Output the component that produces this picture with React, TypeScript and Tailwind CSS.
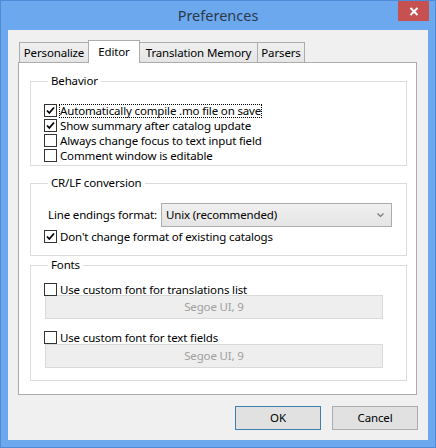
import React from "react";

const CheckMark = () => (
  <svg width="11" height="11" viewBox="0 0 11 11" className="block">
    <path d="M2 5.5 L4.3 8 L9 2.5" fill="none" stroke="#000" strokeWidth="1.8" />
  </svg>
);

const Checkbox = ({ checked, label, focused }: { checked?: boolean; label: string; focused?: boolean }) => (
  <div className="flex items-center h-[15px] leading-[15px]">
    <div className="w-[13px] h-[13px] border border-[#333333] bg-white flex items-center justify-center shrink-0">
      {checked && <CheckMark />}
    </div>
    <span
      className={
        focused
          ? "ml-[2px] px-[1px] leading-[14px] whitespace-nowrap outline outline-1 outline-dotted outline-black -outline-offset-1"
          : "ml-[3px] leading-[14px] whitespace-nowrap"
      }
    >
      {label}
    </span>
  </div>
);

const Group = ({ title, className, children }: { title: string; className: string; children: React.ReactNode }) => (
  <fieldset className={"border border-[#dcdcdc] ml-[11px] w-[377px] " + className}>
    <legend className="ml-[4px] px-[3px] leading-[16px]">{title}</legend>
    {children}
  </fieldset>
);

const FontButton = () => (
  <div className="ml-[1px] w-[338px] h-[24px] bg-[#eeeeee] border border-[#d9d9d9] flex items-center justify-center text-[#a0a0a0]">
    Segoe UI, 9
  </div>
);

export default function App() {
  return (
    <div className="w-[436px] h-[448px] bg-[#6ba8ee] border border-[#4e8bd6] flex flex-col font-['Noto_Sans',sans-serif] text-[11.5px] tracking-[-0.15px] text-black">
      {/* title bar */}
      <div className="h-[29px] grid grid-cols-[1fr_auto_1fr]">
        <div></div>
        <div className="text-[14.5px] text-[#2d3a4a] pt-[4px] leading-[20px] tracking-normal">Preferences</div>
        <div className="flex justify-end items-start pr-[6px]">
          <div className="w-[31px] h-[20px] bg-[#c75050] flex items-center justify-center">
            <svg width="10" height="9" viewBox="0 0 10 9">
              <path d="M1.5 1 L8.5 8 M8.5 1 L1.5 8" stroke="#fff" strokeWidth="2" />
            </svg>
          </div>
        </div>
      </div>

      {/* client area */}
      <div className="mx-[7px] mb-[7px] flex-1 bg-[#f0f0f0] flex flex-col">
        <div className="mt-[10px] ml-[11px] flex items-end h-[23px] relative z-10">
          <div className="w-[70px] h-[21px] border border-[#acacac] bg-gradient-to-b from-[#f0f0f0] to-[#e5e5e5] flex items-center justify-center">
            Personalize
          </div>
          <div className="-ml-px w-[52px] h-[23px] border border-b-0 border-[#acacac] bg-white flex items-start justify-center pt-[2px] relative z-10">
            Editor
          </div>
          <div className="-ml-px w-[119px] h-[21px] border border-[#acacac] bg-gradient-to-b from-[#f0f0f0] to-[#e5e5e5] flex items-center justify-center">
            Translation Memory
          </div>
          <div className="-ml-px w-[48px] h-[21px] border border-[#acacac] bg-gradient-to-b from-[#f0f0f0] to-[#e5e5e5] flex items-center justify-center">
            Parsers
          </div>
        </div>

        <div className="-mt-px ml-[10px] w-[399px] h-[333px] bg-white border border-[#acacac] flex flex-col">
          <Group title="Behavior" className="mt-[10px] h-[93px] pl-[13px] pt-[14px]">
            <Checkbox checked focused label="Automatically compile .mo file on save" />
            <Checkbox checked label="Show summary after catalog update" />
            <Checkbox label="Always change focus to text input field" />
            <Checkbox label="Comment window is editable" />
          </Group>

          <Group title="CR/LF conversion" className="mt-[9px] h-[81px] pl-[13px] pt-[12px]">
            <div className="flex items-center">
              <span className="ml-[4px] w-[113px] whitespace-nowrap">Line endings format:</span>
              <div className="w-[231px] h-[24px] border border-[#acacac] bg-gradient-to-b from-[#f0f0f0] to-[#e5e5e5] flex items-center justify-between pl-[4px] pr-[7px]">
                <span>Unix (recommended)</span>
                <svg width="7" height="5" viewBox="0 0 7 5">
                  <path d="M0.5 0.5 L3.5 3.5 L6.5 0.5" fill="none" stroke="#777" strokeWidth="1.2" />
                </svg>
              </div>
            </div>
            <div className="mt-[2px]">
              <Checkbox checked label="Don't change format of existing catalogs" />
            </div>
          </Group>

          <Group title="Fonts" className="mt-[1px] h-[124px] pl-[13px] pt-[9px]">
            <Checkbox label="Use custom font for translations list" />
            <div className="-mt-[2px]">
              <FontButton />
            </div>
            <div className="mt-[11px]">
              <Checkbox label="Use custom font for text fields" />
            </div>
            <div className="-mt-[1px]">
              <FontButton />
            </div>
          </Group>
        </div>

        <div className="mt-[11px] flex justify-end gap-[11px] pr-[10px]">
          <div className="w-[86px] h-[24px] bg-[#e1e1e1] border border-[#3c7fb1] flex items-center justify-center">OK</div>
          <div className="w-[86px] h-[24px] bg-[#e1e1e1] border border-[#adadad] flex items-center justify-center">Cancel</div>
        </div>
      </div>
    </div>
  );
}
